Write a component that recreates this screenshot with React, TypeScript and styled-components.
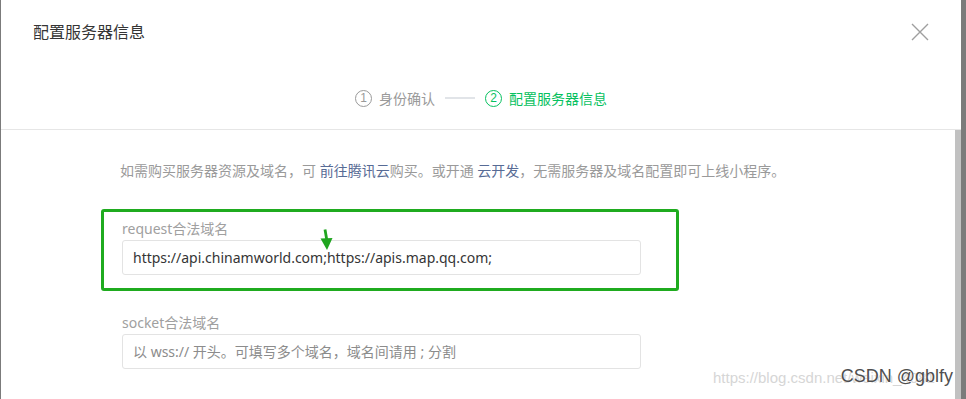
import styled, { createGlobalStyle } from 'styled-components'

const GlobalStyle = createGlobalStyle`
  html, body {
    margin: 0;
    padding: 0;
    background: #7b7b7b;
  }
  * {
    box-sizing: border-box;
  }
`

const font = `"Noto Sans", "Noto Sans CJK SC", sans-serif`

const Backdrop = styled.div`
  width: 966px;
  height: 399px;
  padding-left: 1px;
  background: #7b7b7b;
  overflow: hidden;
`

const Dialog = styled.div`
  width: 960px;
  height: 399px;
  background: #fff;
  display: flex;
  flex-direction: column;
  font-family: ${font};
`

const Header = styled.header`
  padding: 23px 32px 21px;
  border-bottom: 1px solid #e6e6e6;
`

const TitleRow = styled.div`
  display: flex;
  align-items: center;
  justify-content: space-between;
  height: 18px;
`

const Title = styled.h2`
  margin: 0;
  font-size: 16px;
  font-weight: 400;
  color: #353535;
  line-height: 18px;
`

const CloseButton = styled.button`
  width: 18px;
  height: 18px;
  padding: 0;
  border: 0;
  background: none;
  display: flex;
  cursor: pointer;
`

const Steps = styled.ol`
  margin: 47px 0 0;
  padding: 0;
  list-style: none;
  display: flex;
  align-items: center;
  justify-content: center;
  height: 20px;
`

const Step = styled.li<{ $active?: boolean }>`
  display: flex;
  align-items: center;
  gap: 7px;
  font-size: 14px;
  color: ${({ $active }) => ($active ? '#07c160' : '#9a9a9a')};
`

const StepIndex = styled.span`
  width: 17px;
  height: 17px;
  border: 1px solid currentColor;
  border-radius: 50%;
  display: flex;
  align-items: center;
  justify-content: center;
  font-family: "Liberation Sans", sans-serif;
  font-size: 12px;
  line-height: 1;
`

const Connector = styled.li`
  width: 30px;
  height: 2px;
  margin: 0 10px;
  background: #e1e4e8;
`

const Body = styled.div`
  flex: 1;
  display: flex;
  min-height: 0;
  position: relative;
`

const Content = styled.div`
  flex: 1;
  padding: 31px 0 0 100px;
  overflow: hidden;
`

const ScrollThumb = styled.div`
  width: 6px;
  background: #c1c1c1;
`

const Intro = styled.p`
  margin: 0 0 28px 19px;
  font-size: 14px;
  line-height: 20px;
  color: #9a9a9a;
`

const Link = styled.a`
  color: #576b95;
  text-decoration: none;
`

const Field = styled.div<{ $highlight?: boolean }>`
  position: relative;
  width: 578px;
  padding: 8px 35px 13px 18px;
  margin-bottom: 12px;
  border: 3px solid ${({ $highlight }) => ($highlight ? '#1fab1f' : 'transparent')};
  border-radius: 3px;
`

const Label = styled.label`
  display: block;
  margin-bottom: 2px;
  font-size: 14px;
  line-height: 18px;
  color: #a0a0a0;
`

const Input = styled.input`
  display: block;
  width: 519px;
  height: 35px;
  padding: 0 10px;
  border: 1px solid #e3e3e3;
  border-radius: 3px;
  font-family: ${font};
  font-size: 14px;
  color: #353535;
  outline: none;
  &::placeholder {
    color: #8c8c8c;
  }
`

const Pointer = styled.svg`
  position: absolute;
  left: 216px;
  top: 17px;
`

const Watermark = styled.div`
  position: absolute;
  right: 6px;
  bottom: 11px;
  width: 242px;
  height: 22px;
  font-family: "Liberation Sans", Arial, sans-serif;
`

const WatermarkUrl = styled.span`
  position: absolute;
  left: 0;
  bottom: 2px;
  font-size: 15px;
  color: #d6d6d6;
  white-space: nowrap;
`

const WatermarkName = styled.span`
  position: absolute;
  right: 2px;
  bottom: 1px;
  font-size: 18px;
  color: #4f4f4f;
  white-space: nowrap;
  text-shadow: 0 0 1px #fff, 0 0 1px #fff;
`

const App = () => {
  return (
    <>
      <GlobalStyle />
      <Backdrop>
        <Dialog>
          <Header>
            <TitleRow>
              <Title>配置服务器信息</Title>
              <CloseButton aria-label="关闭">
                <svg width="18" height="18" viewBox="0 0 18 18">
                  <path d="M1 1L17 17M17 1L1 17" stroke="#9f9f9f" strokeWidth="1.4" fill="none" />
                </svg>
              </CloseButton>
            </TitleRow>
            <Steps>
              <Step>
                <StepIndex>1</StepIndex>
                身份确认
              </Step>
              <Connector />
              <Step $active>
                <StepIndex>2</StepIndex>
                配置服务器信息
              </Step>
            </Steps>
          </Header>
          <Body>
            <Content>
              <Intro>
                如需购买服务器资源及域名，可 <Link href="#">前往腾讯云</Link>购买。或开通 <Link href="#">云开发</Link>，无需服务器及域名配置即可上线小程序。
              </Intro>
              <Field $highlight>
                <Label htmlFor="request-domain">request合法域名</Label>
                <Input
                  id="request-domain"
                  defaultValue="https://api.chinamworld.com;https://apis.map.qq.com;"
                />
                <Pointer width="13" height="21" viewBox="0 0 13 21">
                  <path d="M5 0.5L6.8 11" stroke="#1fa51f" strokeWidth="2.8" fill="none" />
                  <path d="M0.5 9.5L12.5 9L7 21Z" fill="#1fa51f" />
                </Pointer>
              </Field>
              <Field>
                <Label htmlFor="socket-domain">socket合法域名</Label>
                <Input id="socket-domain" placeholder="以 wss:// 开头。可填写多个域名，域名间请用 ; 分割" />
              </Field>
            </Content>
            <ScrollThumb />
            <Watermark>
              <WatermarkUrl>https://blog.csdn.net/weixin_4081</WatermarkUrl>
              <WatermarkName>CSDN @gblfy</WatermarkName>
            </Watermark>
          </Body>
        </Dialog>
      </Backdrop>
    </>
  )
}

export default App
